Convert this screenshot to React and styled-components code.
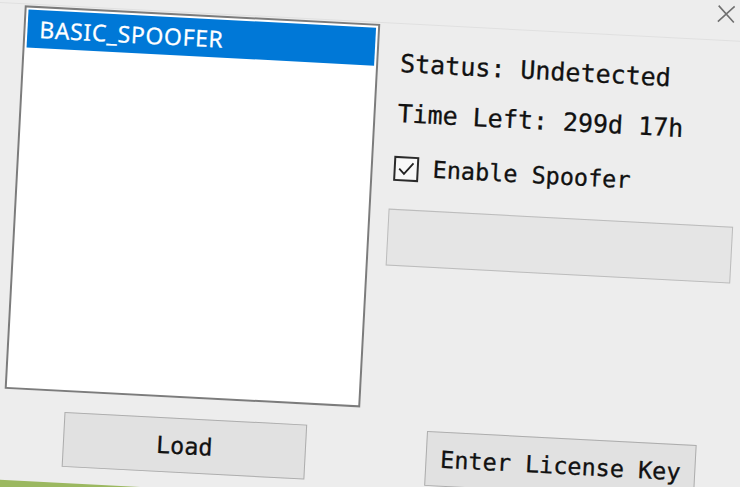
import React from 'react';
import styled, { createGlobalStyle } from 'styled-components';

const GlobalStyle = createGlobalStyle`
  html, body {
    margin: 0;
    padding: 0;
    background: #9bb860;
  }
`;

const Screen = styled.div`
  width: 740px;
  height: 487px;
  overflow: hidden;
  background: #9bb860;
`;

const Window = styled.div`
  width: 766px;
  height: 519px;
  background: #ededed;
  transform-origin: 0 0;
  transform: rotate(3deg) translateY(-40px);
  font-family: "DejaVu Sans Mono", "Liberation Mono", monospace;
  color: #111;
  -webkit-text-stroke: 0.3px #111;
  box-sizing: border-box;
`;

const TitleBar = styled.div`
  height: 43px;
  box-sizing: border-box;
  display: flex;
  justify-content: flex-end;
  align-items: flex-start;
  padding: 6px 30px 0 0;
  border-bottom: 1px solid #e0e0e0;
`;

const CloseIcon = styled.svg`
  width: 20px;
  height: 20px;
  stroke: #707070;
  stroke-width: 1.6;
`;

const Body = styled.div`
  display: grid;
  grid-template-columns: 356px 345px;
  grid-template-rows: 384px 55px;
  column-gap: 18px;
  row-gap: 20px;
  padding: 1px 0 0 25px;
`;

const ListBox = styled.div`
  background: #fff;
  border: 2px solid #7c7c7c;
  box-sizing: border-box;
  padding: 2px 2px;
`;

const ListItem = styled.div`
  height: 38px;
  line-height: 38px;
  padding-left: 12px;
  background: ${p => (p.$selected ? '#0078d7' : 'transparent')};
  color: ${p => (p.$selected ? '#fff' : '#111')};
  -webkit-text-stroke: 0.25px ${p => (p.$selected ? '#fff' : '#111')};
  font-family: "Noto Sans", "Open Sans", sans-serif;
  font-size: 23px;
  letter-spacing: 0.6px;
`;

const Panel = styled.div`
  display: flex;
  flex-direction: column;
  padding-top: 24px;
`;

const InfoLine = styled.div`
  font-size: 25px;
  line-height: 30px;
  padding-left: 4px;
  margin-bottom: ${p => p.$gap || 0}px;
  white-space: pre;
`;

const CheckRow = styled.label`
  display: flex;
  align-items: center;
  gap: 14px;
  padding-left: 3px;
  font-size: 23.5px;
  line-height: 28px;
  margin-bottom: 27px;
`;

const CheckBox = styled.span`
  width: 25px;
  height: 25px;
  box-sizing: border-box;
  border: 2px solid #2a2a2a;
  background: #f8f8f8;
  display: flex;
  align-items: center;
  justify-content: center;
`;

const Progress = styled.div`
  height: 57px;
  background: #e5e5e5;
  border: 1.5px solid #bcbcbc;
  box-sizing: border-box;
`;

const Button = styled.button`
  width: ${p => p.$width}px;
  height: 55px;
  margin-left: ${p => p.$offset}px;
  background: #e1e1e1;
  border: 1.5px solid #adadad;
  font-family: "DejaVu Sans Mono", "Liberation Mono", monospace;
  font-size: 23.5px;
  color: #111;
  -webkit-text-stroke: 0.3px #111;
  padding: 0;
  display: flex;
  align-items: center;
  justify-content: center;
`;

export default function App() {
  return (
    <>
      <GlobalStyle />
      <Screen>
        <Window>
          <TitleBar>
            <CloseIcon viewBox="0 0 20 20" fill="none">
              <path d="M2 2 L18 18 M18 2 L2 18" />
            </CloseIcon>
          </TitleBar>
          <Body>
            <ListBox>
              <ListItem $selected>BASIC_SPOOFER</ListItem>
            </ListBox>
            <Panel>
              <InfoLine $gap={20}>Status: Undetected</InfoLine>
              <InfoLine $gap={25}>Time Left: 299d 17h</InfoLine>
              <CheckRow>
                <CheckBox>
                  <svg width="19" height="19" viewBox="0 0 19 19" fill="none" stroke="#222" strokeWidth="1.8">
                    <path d="M2.5 9.5 L7.5 14.5 L16.5 3.5" />
                  </svg>
                </CheckBox>
                Enable Spoofer
              </CheckRow>
              <Progress />
            </Panel>
            <div>
              <Button $width={243} $offset={61}>Load</Button>
            </div>
            <div>
              <Button $width={270} $offset={50}>Enter License Key</Button>
            </div>
          </Body>
        </Window>
      </Screen>
    </>
  );
}
